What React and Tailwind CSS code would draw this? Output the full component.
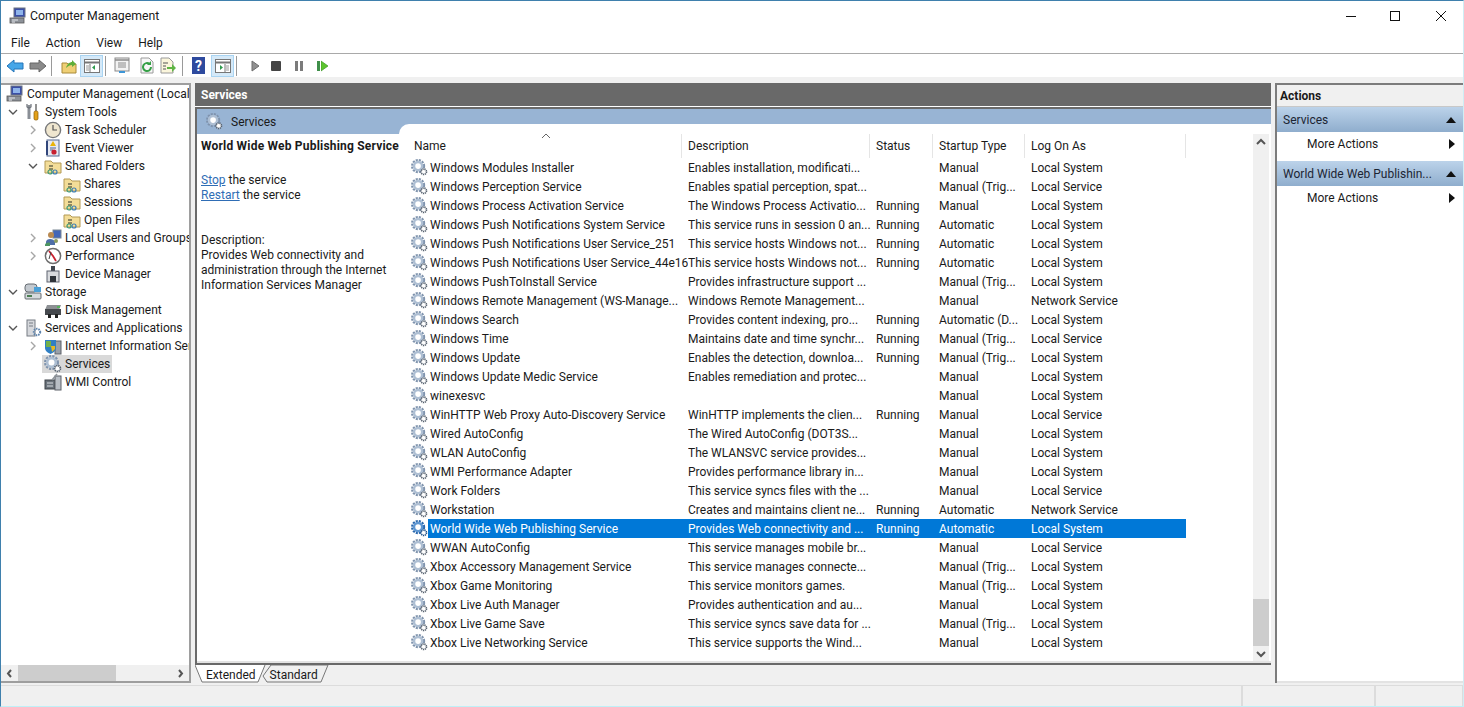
const rows = [
  ["Windows Modules Installer", "Enables installation, modificati...", "", "Manual", "Local System"],
  ["Windows Perception Service", "Enables spatial perception, spat...", "", "Manual (Trig...", "Local Service"],
  ["Windows Process Activation Service", "The Windows Process Activatio...", "Running", "Manual", "Local System"],
  ["Windows Push Notifications System Service", "This service runs in session 0 an...", "Running", "Automatic", "Local System"],
  ["Windows Push Notifications User Service_251", "This service hosts Windows not...", "Running", "Automatic", "Local System"],
  ["Windows Push Notifications User Service_44e16", "This service hosts Windows not...", "Running", "Automatic", "Local System"],
  ["Windows PushToInstall Service", "Provides infrastructure support ...", "", "Manual (Trig...", "Local System"],
  ["Windows Remote Management (WS-Manage...", "Windows Remote Management...", "", "Manual", "Network Service"],
  ["Windows Search", "Provides content indexing, pro...", "Running", "Automatic (D...", "Local System"],
  ["Windows Time", "Maintains date and time synchr...", "Running", "Manual (Trig...", "Local Service"],
  ["Windows Update", "Enables the detection, downloa...", "Running", "Manual (Trig...", "Local System"],
  ["Windows Update Medic Service", "Enables remediation and protec...", "", "Manual", "Local System"],
  ["winexesvc", "", "", "Manual", "Local System"],
  ["WinHTTP Web Proxy Auto-Discovery Service", "WinHTTP implements the clien...", "Running", "Manual", "Local Service"],
  ["Wired AutoConfig", "The Wired AutoConfig (DOT3S...", "", "Manual", "Local System"],
  ["WLAN AutoConfig", "The WLANSVC service provides...", "", "Manual", "Local System"],
  ["WMI Performance Adapter", "Provides performance library in...", "", "Manual", "Local System"],
  ["Work Folders", "This service syncs files with the ...", "", "Manual", "Local Service"],
  ["Workstation", "Creates and maintains client ne...", "Running", "Automatic", "Network Service"],
  ["World Wide Web Publishing Service", "Provides Web connectivity and ...", "Running", "Automatic", "Local System"],
  ["WWAN AutoConfig", "This service manages mobile br...", "", "Manual", "Local Service"],
  ["Xbox Accessory Management Service", "This service manages connecte...", "", "Manual (Trig...", "Local System"],
  ["Xbox Game Monitoring", "This service monitors games.", "", "Manual (Trig...", "Local System"],
  ["Xbox Live Auth Manager", "Provides authentication and au...", "", "Manual", "Local System"],
  ["Xbox Live Game Save", "This service syncs save data for ...", "", "Manual (Trig...", "Local System"],
  ["Xbox Live Networking Service", "This service supports the Wind...", "", "Manual", "Local System"],
];

const tree = [
  { label: "Computer Management (Local", level: 0, icon: "computer" },
  { label: "System Tools", level: 1, open: true, icon: "tools" },
  { label: "Task Scheduler", level: 2, closed: true, icon: "clock" },
  { label: "Event Viewer", level: 2, closed: true, icon: "log" },
  { label: "Shared Folders", level: 2, open: true, icon: "folder" },
  { label: "Shares", level: 3, icon: "folder" },
  { label: "Sessions", level: 3, icon: "folder" },
  { label: "Open Files", level: 3, icon: "folder" },
  { label: "Local Users and Groups", level: 2, closed: true, icon: "users" },
  { label: "Performance", level: 2, closed: true, icon: "perf" },
  { label: "Device Manager", level: 2, icon: "device" },
  { label: "Storage", level: 1, open: true, icon: "storage" },
  { label: "Disk Management", level: 2, icon: "disk" },
  { label: "Services and Applications", level: 1, open: true, icon: "server" },
  { label: "Internet Information Services (IIS) Manager", level: 2, closed: true, icon: "iis" },
  { label: "Services", level: 2, selected: true, icon: "gear" },
  { label: "WMI Control", level: 2, icon: "wmi" },
];

function Gear({ size = 18, dark = false }) {
  const main = dark ? "#2a68ad" : "#7f93ad";
  const inner = dark ? "#5f97d2" : "#aebfd3";
  return (
    <svg width={size} height={size} viewBox="0 0 18 18" className="shrink-0">
      <circle cx="7.5" cy="7.5" r="6.3" fill="none" stroke={main} strokeWidth="2.4" strokeDasharray="2.2 1.1" />
      <circle cx="7.5" cy="7.5" r="4.3" fill="#fff" stroke={inner} strokeWidth="2.6" />
      <circle cx="13.5" cy="13.5" r="2.9" fill="#fff" stroke={dark ? "#1d4f86" : "#55606e"} strokeWidth="1.8" strokeDasharray="1.3 0.7" />
      <circle cx="13.5" cy="13.5" r="1.1" fill="#fff" />
    </svg>
  );
}

function TreeIcon({ name }) {
  const box = { width: 18, height: 18, viewBox: "0 0 18 18", className: "shrink-0" };
  if (name === "gear") return <Gear />;
  if (name === "computer")
    return (
      <svg {...box}>
        <rect x="5" y="1" width="11" height="9" fill="#3a4fa8" stroke="#6b7280" />
        <rect x="7" y="3" width="7" height="5" fill="#8fb4ea" />
        <rect x="1" y="11" width="14" height="5" fill="#8d9299" stroke="#555" strokeWidth="0.8" />
        <path d="M3 13h6M3 15h3" stroke="#e5e7eb" />
      </svg>
    );
  if (name === "tools")
    return (
      <svg {...box}>
        <path d="M5 2v14" stroke="#8a8f96" strokeWidth="3" />
        <path d="M3 1v3l2 1 2-1V1" fill="none" stroke="#6b7078" strokeWidth="1.2" />
        <path d="M12 1v7" stroke="#777" strokeWidth="1.6" />
        <rect x="10" y="8" width="4" height="9" rx="1.5" fill="#e3a11a" stroke="#8a5a05" strokeWidth="0.7" />
      </svg>
    );
  if (name === "clock")
    return (
      <svg {...box}>
        <circle cx="9" cy="9" r="7.6" fill="#efe6cf" stroke="#77787a" strokeWidth="1.4" />
        <path d="M9 4v5h4" fill="none" stroke="#555" strokeWidth="1.2" />
      </svg>
    );
  if (name === "log")
    return (
      <svg {...box}>
        <rect x="3" y="1" width="12" height="16" fill="#e6e9f2" stroke="#55688f" />
        <path d="M3 2v14" stroke="#30457a" strokeWidth="2" />
        <path d="M9 2l3 5H6z" fill="#eab308" />
        <path d="M6 9h6M6 11h3" stroke="#51638a" />
        <circle cx="10" cy="13" r="2.6" fill="#c8202f" />
      </svg>
    );
  if (name === "folder")
    return (
      <svg {...box}>
        <path d="M1 4h6l2 2h8v10H1z" fill="#f3dd98" stroke="#b39a55" />
        <path d="M5 9h4M5 12h4" stroke="#6d6a4c" strokeWidth="1.4" />
        <circle cx="6" cy="15" r="2" fill="none" stroke="#3c9b78" strokeWidth="1.2" />
        <circle cx="11" cy="15" r="2" fill="none" stroke="#3f7fb5" strokeWidth="1.2" />
      </svg>
    );
  if (name === "users")
    return (
      <svg {...box}>
        <rect x="9" y="1" width="8" height="8" fill="#4466b8" stroke="#7b8794" />
        <circle cx="7" cy="6" r="3" fill="#b98a52" />
        <path d="M2 13c0-4 8-4 9 0v3H2z" fill="#4f6ea8" />
        <path d="M1 16c0-2 3-3 5-2v3H1z" fill="#4d9461" />
        <circle cx="12" cy="12" r="2" fill="#8a9a5b" />
      </svg>
    );
  if (name === "perf")
    return (
      <svg {...box}>
        <circle cx="9" cy="9" r="7.6" fill="#fff" stroke="#6e6e6e" strokeWidth="1.5" />
        <path d="M5 4l4 5 3 5" fill="none" stroke="#c8202f" strokeWidth="1.8" />
        <path d="M5 12l2-7" stroke="#444" />
      </svg>
    );
  if (name === "device")
    return (
      <svg {...box}>
        <rect x="7" y="1" width="4" height="5" fill="#40454d" />
        <rect x="3" y="6" width="12" height="11" fill="#d9dbde" stroke="#5f6570" />
        <rect x="6" y="11" width="6" height="6" fill="#2f343a" />
      </svg>
    );
  if (name === "storage")
    return (
      <svg {...box}>
        <rect x="1" y="1" width="12" height="8" rx="3" fill="#c3c9cf" stroke="#666c72" />
        <rect x="10" y="4" width="7" height="5" fill="#4aa0d8" />
        <rect x="1" y="10" width="16" height="6" rx="1" fill="#d5d9dc" stroke="#666c72" />
        <rect x="3" y="12" width="5" height="2" fill="#4c7f52" />
      </svg>
    );
  if (name === "disk")
    return (
      <svg {...box}>
        <path d="M3 4h14l-2 5H1z" fill="#8d9094" />
        <rect x="1" y="8" width="16" height="6" fill="#46494e" />
        <rect x="4" y="13" width="3" height="4" fill="#222" />
        <rect x="11" y="13" width="3" height="4" fill="#222" />
        <rect x="13" y="5" width="3" height="2" fill="#57b35d" />
      </svg>
    );
  if (name === "server")
    return (
      <svg {...box}>
        <rect x="3" y="1" width="8" height="16" fill="#d6d8dc" stroke="#777c84" />
        <path d="M5 4h4M5 7h4" stroke="#777c84" />
        <circle cx="13" cy="13" r="3.2" fill="none" stroke="#5c83ad" strokeWidth="2" strokeDasharray="1.4 0.9" />
      </svg>
    );
  if (name === "iis")
    return (
      <svg {...box}>
        <rect x="11" y="4" width="6" height="13" fill="#9aa0a8" stroke="#5c6068" />
        <path d="M1 3h11v8c0 3-3 5-5.5 6C4 16 1 14 1 11z" fill="#2f7fc4" />
        <path d="M2 4h5v6H2z" fill="#72b04a" />
        <path d="M7 9h4v3l-3 3z" fill="#e5b922" />
      </svg>
    );
  if (name === "wmi")
    return (
      <svg {...box}>
        <rect x="1" y="7" width="10" height="9" fill="#6a727b" stroke="#3c4249" />
        <rect x="11" y="3" width="6" height="14" fill="#b8bec5" stroke="#5c6068" />
        <path d="M3 10h6M3 13h6" stroke="#d8dde2" />
        <path d="M8 7l5-6" stroke="#8d9399" strokeWidth="1.5" />
      </svg>
    );
  return null;
}

function Chevron({ open }) {
  return (
    <svg width="10" height="10" viewBox="0 0 10 10" className="shrink-0">
      {open ? (
        <path d="M1 3l4 4 4-4" fill="none" stroke="#555" strokeWidth="1.4" />
      ) : (
        <path d="M3 1l4 4-4 4" fill="none" stroke="#a6a6a6" strokeWidth="1.4" />
      )}
    </svg>
  );
}

function TreeRow({ item }) {
  const pad = item.level === 0 ? "pl-[3px]" : item.level === 1 ? "pl-[7px]" : item.level === 2 ? "pl-[27px]" : "pl-[60px]";
  return (
    <div className={"flex h-[18px] items-center whitespace-nowrap " + pad}>
      {item.level === 1 || item.level === 2 ? (
        <span className="flex w-[14px] shrink-0 items-center">
          {(item.open || item.closed) && <Chevron open={item.open} />}
        </span>
      ) : null}
      <span className={"flex h-[18px] items-center pr-[2px] pl-[2px] " + (item.selected ? "bg-[#d9d9d9]" : "")}>
        <TreeIcon name={item.icon} />
        <span className="ml-[3px]">{item.label}</span>
      </span>
    </div>
  );
}

function ToolBox({ active, children, className = "" }) {
  return (
    <span
      className={
        "flex h-[22px] w-[23px] items-center justify-center border " +
        (active ? "border-[#a9d4f2] bg-[#d5e9f8] " : "border-transparent ") +
        className
      }
    >
      {children}
    </span>
  );
}

function Sep({ className = "" }) {
  return <span className={"h-[20px] w-px bg-[#9a9a9a] " + className} />;
}

function Toolbar() {
  return (
    <div className="flex h-[23px] shrink-0 items-center bg-white pl-[5px]">
      <svg width="18" height="16" viewBox="0 0 18 16">
        <path d="M1 8l7-6v3h9v6H8v3z" fill="#46a6e8" stroke="#2474b8" />
      </svg>
      <svg width="18" height="16" viewBox="0 0 18 16" className="ml-[5px]">
        <path d="M17 8l-7-6v3H1v6h9v3z" fill="#8a8a8a" stroke="#666" />
      </svg>
      <Sep className="ml-[4px]" />
      <svg width="16" height="16" viewBox="0 0 16 16" className="ml-[9px]">
        <path d="M1 5h5l1 1h8v9H1z" fill="#efcf75" stroke="#a98a3a" />
        <path d="M5 10c1-4 4-6 6-6V2l4 4-4 3V7c-2 0-4 1-6 3z" fill="#5fae3a" />
      </svg>
      <ToolBox active className="ml-[3px]">
        <svg width="16" height="14" viewBox="0 0 16 14">
          <rect x="0.5" y="0.5" width="15" height="13" fill="#fff" stroke="#777" />
          <path d="M1 3.5h14" stroke="#777" strokeWidth="2" />
          <path d="M6 5v8" stroke="#777" />
          <path d="M2 7h3M2 9h3M2 11h3" stroke="#999" />
          <path d="M11 6l-3 2.5 3 2.5z" fill="#2f9a4d" />
        </svg>
      </ToolBox>
      <Sep className="ml-[2px]" />
      <svg width="16" height="17" viewBox="0 0 16 17" className="ml-[8px]">
        <rect x="1" y="1" width="14" height="13" fill="#f3f3f3" stroke="#8a8a8a" />
        <path d="M1 3h14" stroke="#8a8a8a" strokeWidth="1.5" />
        <path d="M4 6h8M4 8h8M4 10h8" stroke="#8a8a8a" />
        <path d="M5 15h6" stroke="#3d95d6" strokeWidth="2" />
      </svg>
      <svg width="16" height="17" viewBox="0 0 16 17" className="ml-[9px]">
        <path d="M2 1h8l4 4v11H2z" fill="#f7f7f7" stroke="#9a9a9a" />
        <path d="M12 10a4 4 0 1 1-1.4-3" fill="none" stroke="#35a046" strokeWidth="2" />
        <path d="M12 4v4H8z" fill="#35a046" />
      </svg>
      <svg width="16" height="17" viewBox="0 0 16 17" className="ml-[5px]">
        <path d="M1 1h8l4 4v11H1z" fill="#fbf6dc" stroke="#9a9a9a" />
        <path d="M3 6h5M3 9h3M3 12h3" stroke="#555" />
        <path d="M7 10h5V7l4 4-4 4v-3H7z" fill="#5eb544" />
      </svg>
      <Sep className="ml-[6px]" />
      <span className="ml-[9px] flex h-[17px] w-[13px] items-center justify-center bg-[#2e4a9e] text-[14px] leading-none font-bold text-white">?</span>
      <ToolBox active className="ml-[6px]">
        <svg width="16" height="14" viewBox="0 0 16 14">
          <rect x="0.5" y="0.5" width="15" height="13" fill="#fff" stroke="#777" />
          <path d="M1 3.5h14" stroke="#777" strokeWidth="2" />
          <path d="M10 5v8" stroke="#777" />
          <path d="M11 7h3M11 9h3M11 11h3" stroke="#999" />
          <path d="M5 6l3 2.5L5 11z" fill="#2f9a4d" />
        </svg>
      </ToolBox>
      <Sep className="ml-[2px]" />
      <svg width="9" height="12" viewBox="0 0 9 12" className="ml-[14px]">
        <path d="M1 1l7 5-7 5z" fill="#909090" stroke="#6f6f6f" />
      </svg>
      <span className="ml-[11px] h-[10px] w-[10px] rounded-[1px] bg-[#444]" />
      <span className="ml-[14px] h-[10px] w-[3px] bg-[#7b7b7b]" />
      <span className="ml-[2px] h-[10px] w-[3px] bg-[#7b7b7b]" />
      <span className="ml-[14px] h-[10px] w-[3px] bg-[#3f8f4a]" />
      <svg width="8" height="12" viewBox="0 0 8 12" className="ml-[1px]">
        <path d="M0 1l7 5-7 5z" fill="#5cc42e" stroke="#3c962a" strokeWidth="0.7" />
      </svg>
    </div>
  );
}

function ActionBand({ label }) {
  return (
    <div className="flex h-[25px] shrink-0 items-center justify-between bg-gradient-to-b from-[#bcd3ea] to-[#8fadcd] pr-[7px] pl-[6px]">
      <span className="truncate text-[#1c2533]">{label}</span>
      <svg width="10" height="6" viewBox="0 0 10 6" className="shrink-0">
        <path d="M5 0l5 6H0z" fill="#111" />
      </svg>
    </div>
  );
}

function ActionItem() {
  return (
    <div className="flex h-[29px] shrink-0 items-center justify-between pr-[8px] pb-[5px] pl-[30px]">
      <span>More Actions</span>
      <svg width="6" height="10" viewBox="0 0 6 10">
        <path d="M0 0l6 5-6 5z" fill="#111" />
      </svg>
    </div>
  );
}

function HeaderCell({ className, children }) {
  return <span className={"flex h-[24px] items-center border-r border-[#e5e5e5] " + className}>{children}</span>;
}

function ServiceRow({ row }) {
  const selected = row[0] === "World Wide Web Publishing Service";
  return (
    <div className="flex h-[19px] items-center whitespace-nowrap">
      <span className="ml-[12px] flex w-[17px] shrink-0 items-center">
        <Gear size={17} dark={selected} />
      </span>
      <div className={"flex h-[19px] w-[758px] items-center " + (selected ? "bg-[#0078d7] text-white" : "")}>
        <span className="w-[260px] shrink-0 overflow-hidden pl-[2px]">{row[0]}</span>
        <span className="w-[188px] shrink-0 overflow-hidden">{row[1]}</span>
        <span className="w-[63px] shrink-0">{row[2]}</span>
        <span className="w-[92px] shrink-0">{row[3]}</span>
        <span className="shrink-0">{row[4]}</span>
      </div>
    </div>
  );
}

export default function App() {
  return (
    <div className="flex h-[707px] w-[1464px] flex-col overflow-hidden border border-t-[#3f80ad] border-r-[#cfeef5] border-b-[#bff0f7] border-l-[#3f80ad] bg-[#f0f0f0] font-['Roboto',sans-serif] text-[12px] text-[#1a1a1a]">
      <div className="flex h-[29px] shrink-0 items-center justify-between bg-white pt-[1px] pl-[8px]">
        <div className="flex items-center text-[12.25px]">
          <TreeIcon name="computer" />
          <span className="ml-[3px]">Computer Management</span>
        </div>
        <div className="flex items-center">
          <svg width="10" height="10" viewBox="0 0 10 10">
            <path d="M0 5.5h10" stroke="#111" />
          </svg>
          <svg width="10" height="10" viewBox="0 0 10 10" className="ml-[34px]">
            <rect x="0.5" y="0.5" width="9" height="9" fill="none" stroke="#111" />
          </svg>
          <svg width="10" height="10" viewBox="0 0 10 10" className="mr-[17px] ml-[36px]">
            <path d="M0 0l10 10M10 0L0 10" stroke="#111" />
          </svg>
        </div>
      </div>
      <div className="flex h-[24px] shrink-0 items-center gap-[16px] border-b border-[#a9a9a9] bg-white pt-[2px] pl-[10px]">
        <span>File</span>
        <span>Action</span>
        <span>View</span>
        <span>Help</span>
      </div>
      <Toolbar />
      <div className="h-[6px] shrink-0" />
      <div className="flex h-[600px] shrink-0 gap-[4px]">
        <aside className="flex h-[600px] w-[190px] shrink-0 flex-col border-t-2 border-r-2 border-b-2 border-[#9e9e9e] bg-white">
          <div className="flex-1 overflow-hidden">
            {tree.map((item) => (
              <TreeRow key={item.label} item={item} />
            ))}
          </div>
          <div className="flex h-[16px] shrink-0 items-center bg-[#f0f0f0]">
            <svg width="17" height="15" viewBox="0 0 17 15">
              <path d="M10 4l-3 3.5 3 3.5" fill="none" stroke="#555" strokeWidth="2" />
            </svg>
            <span className="h-[16px] w-[98px] bg-[#cdcdcd]" />
            <span className="flex-1" />
            <svg width="17" height="15" viewBox="0 0 17 15">
              <path d="M7 4l3 3.5-3 3.5" fill="none" stroke="#555" strokeWidth="2" />
            </svg>
          </div>
        </aside>
        <main className="flex h-[600px] w-[1076px] shrink-0 flex-col">
          <div className="flex h-[23px] shrink-0 items-center bg-[#696969] pl-[6px] font-bold text-white">Services</div>
          <div className="h-px shrink-0 bg-white" />
          <div className="flex min-h-0 flex-1 flex-col border-t-2 border-l-2 border-[#6a6a6a]">
            <div className="flex min-h-0 flex-1">
              <div className="flex w-[202px] shrink-0 flex-col bg-white">
                <div className="flex h-[25px] shrink-0 items-center bg-[#98b4d4] pl-[9px]">
                  <Gear size={17} />
                  <span className="ml-[8px]">Services</span>
                </div>
                <div className="pt-[5px] pl-[4px] leading-[15px]">
                  <div className="font-bold tracking-[0.2px] whitespace-nowrap">World Wide Web Publishing Service</div>
                  <div className="mt-[19px]">
                    <a className="text-[#2f6db5] underline">Stop</a> the service
                  </div>
                  <div>
                    <a className="text-[#2f6db5] underline">Restart</a> the service
                  </div>
                  <div className="mt-[30px]">Description:</div>
                  <div className="w-[195px]">
                    Provides Web connectivity and administration through the Internet Information Services Manager
                  </div>
                </div>
              </div>
              <div className="flex min-w-0 flex-1 flex-col bg-[#98b4d4] pt-[15px]">
                <div className="flex min-h-0 flex-1 rounded-tl-[10px] bg-white pt-[10px]">
                  <div className="w-[854px] shrink-0">
                    <div className="relative flex h-[24px] items-center">
                      <svg width="10" height="6" viewBox="0 0 10 6" className="absolute top-[-1px] left-[142px]">
                        <path d="M1 5l4-4 4 4" fill="none" stroke="#666" />
                      </svg>
                      <HeaderCell className="w-[283px] pl-[15px]">Name</HeaderCell>
                      <HeaderCell className="w-[188px] pl-[6px]">Description</HeaderCell>
                      <HeaderCell className="w-[63px] pl-[6px]">Status</HeaderCell>
                      <HeaderCell className="w-[92px] pl-[6px]">Startup Type</HeaderCell>
                      <HeaderCell className="w-[161px] pl-[6px]">Log On As</HeaderCell>
                    </div>
                    {rows.map((row) => (
                      <ServiceRow key={row[0]} row={row} />
                    ))}
                  </div>
                  <div className="flex h-[528px] w-[16px] shrink-0 flex-col items-center bg-[#f0f0f0]">
                    <svg width="16" height="16" viewBox="0 0 16 16" className="shrink-0">
                      <path d="M4 10l4-4 4 4" fill="none" stroke="#555" strokeWidth="2" />
                    </svg>
                    <span className="flex-1" />
                    <span className="h-[47px] w-[16px] bg-[#cdcdcd]" />
                    <svg width="16" height="16" viewBox="0 0 16 16" className="shrink-0">
                      <path d="M4 6l4 4 4-4" fill="none" stroke="#555" strokeWidth="2" />
                    </svg>
                  </div>
                </div>
              </div>
            </div>
            <div className="h-[2px] shrink-0 bg-[#e3e3e3]" />
          </div>
          <div className="h-[2px] shrink-0 bg-[#696969]" />
          <div className="relative flex h-[18px] shrink-0 items-center bg-[#f0f0f0] pt-[1px]">
            <svg width="140" height="18" viewBox="0 0 140 18" className="absolute top-0 left-0">
              <path d="M0 0L7 17H63L70 0Z" fill="#fff" />
              <path d="M0 0L7 17H63L70 0" fill="none" stroke="#777" />
              <path d="M68 11L76 0H133L126 17H72L68 11" fill="none" stroke="#777" />
            </svg>
            <span className="relative ml-[11px]">Extended</span>
            <span className="relative ml-[14px]">Standard</span>
          </div>
        </main>
        <aside className="flex h-[600px] w-[188px] shrink-0 flex-col border-t-2 border-l-2 border-[#7c7c7c] bg-white">
          <div className="flex h-[22px] shrink-0 items-center border-b border-[#c8c8c8] bg-[#f0f0f0] pl-[3px] font-bold">Actions</div>
          <ActionBand label="Services" />
          <ActionItem />
          <ActionBand label="World Wide Web Publishin..." />
          <ActionItem />
          <div className="flex-1 border-b-2 border-[#e3e3e3]" />
        </aside>
      </div>
      <div className="mt-[2px] flex min-h-0 flex-1 border-t border-[#dcdcdc]">
        <span className="w-[1242px] border-r-2 border-[#dcdcdc]" />
        <span className="w-[133px] border-r-2 border-[#dcdcdc]" />
        <span className="flex-1 border-r border-[#dcdcdc]" />
      </div>
    </div>
  );
}
